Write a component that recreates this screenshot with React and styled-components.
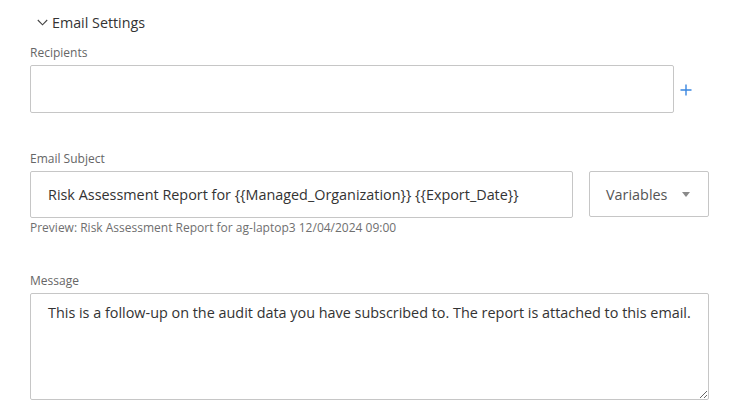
import React from 'react';
import styled, { createGlobalStyle } from 'styled-components';

const GlobalStyle = createGlobalStyle`
  body {
    margin: 0;
    background: #ffffff;
    font-family: "Open Sans", "Noto Sans", sans-serif;
  }
`;

const Panel = styled.div`
  padding: 12px 22px 0 30px;
  width: 731px;
  box-sizing: border-box;
`;

const SectionHeader = styled.div`
  display: flex;
  align-items: center;
  gap: 4px;
  margin-left: 7px;
  height: 20px;
  font-size: 14.3px;
  color: #333;
`;

const Field = styled.div`
  display: flex;
  flex-direction: column;
  margin-top: ${(props) => props.$top}px;
`;

const Label = styled.label`
  font-size: 12px;
  line-height: 15px;
  color: #666;
  margin-bottom: ${(props) => props.$gap}px;
`;

const Row = styled.div`
  display: flex;
  align-items: center;
  gap: ${(props) => props.$gap}px;
`;

const TextBox = styled.input`
  box-sizing: border-box;
  width: ${(props) => props.$width}px;
  height: ${(props) => props.$height}px;
  border: 1px solid #c6c6c6;
  border-radius: 2px;
  padding: 0 17px;
  font-family: "Open Sans", "Noto Sans", sans-serif;
  font-size: 14.4px;
  color: #333;
  outline: none;
  background: #fff;
`;

const AddButton = styled.button`
  border: none;
  background: none;
  padding: 0;
  width: 12px;
  height: 12px;
  display: flex;
  cursor: pointer;
  margin-top: 1px;
`;

const Select = styled.div`
  box-sizing: border-box;
  width: 120px;
  height: 46px;
  border: 1px solid #c6c6c6;
  border-radius: 2px;
  display: flex;
  align-items: center;
  justify-content: space-between;
  padding: 0 18px 0 16px;
  font-size: 14.4px;
  color: #555;
  margin-top: -1px;
`;

const Caret = styled.span`
  width: 0;
  height: 0;
  border-left: 4px solid transparent;
  border-right: 4px solid transparent;
  border-top: 5px solid #8a8a8a;
  margin-top: 1px;
`;

const Hint = styled.div`
  font-size: 12px;
  line-height: 15px;
  color: #6f6f6f;
  margin-top: 2px;
`;

const MessageBox = styled.textarea`
  box-sizing: border-box;
  width: 679px;
  height: 107px;
  border: 1px solid #c6c6c6;
  border-radius: 2px;
  padding: 9px 17px;
  font-family: "Open Sans", "Noto Sans", sans-serif;
  font-size: 14.4px;
  line-height: 19px;
  color: #333;
  outline: none;
  resize: vertical;
  display: block;
`;

function Chevron() {
  return (
    <svg width="11" height="7" viewBox="0 0 11 7" fill="none">
      <path d="M0.8 1 L5.5 5.8 L10.2 1" stroke="#444" strokeWidth="1.1" />
    </svg>
  );
}

function Plus() {
  return (
    <svg width="12" height="12" viewBox="0 0 12 12">
      <path d="M6 0.5 V11.5 M0.5 6 H11.5" stroke="#3a86e0" strokeWidth="1.4" />
    </svg>
  );
}

export default function App() {
  return (
    <>
      <GlobalStyle />
      <Panel>
        <SectionHeader>
          <Chevron />
          <span>Email Settings</span>
        </SectionHeader>

        <Field $top={13}>
          <Label $gap={5}>Recipients</Label>
          <Row $gap={6}>
            <TextBox $width={644} $height={48} />
            <AddButton aria-label="Add recipient">
              <Plus />
            </AddButton>
          </Row>
        </Field>

        <Field $top={38}>
          <Label $gap={5}>Email Subject</Label>
          <Row $gap={16}>
            <TextBox
              $width={543}
              $height={47}
              defaultValue="Risk Assessment Report for {{Managed_Organization}} {{Export_Date}}"
            />
            <Select>
              <span>Variables</span>
              <Caret />
            </Select>
          </Row>
          <Hint>Preview: Risk Assessment Report for ag-laptop3 12/04/2024 09:00</Hint>
        </Field>

        <Field $top={38}>
          <Label $gap={5}>Message</Label>
          <MessageBox defaultValue="This is a follow-up on the audit data you have subscribed to. The report is attached to this email." />
        </Field>
      </Panel>
    </>
  );
}
